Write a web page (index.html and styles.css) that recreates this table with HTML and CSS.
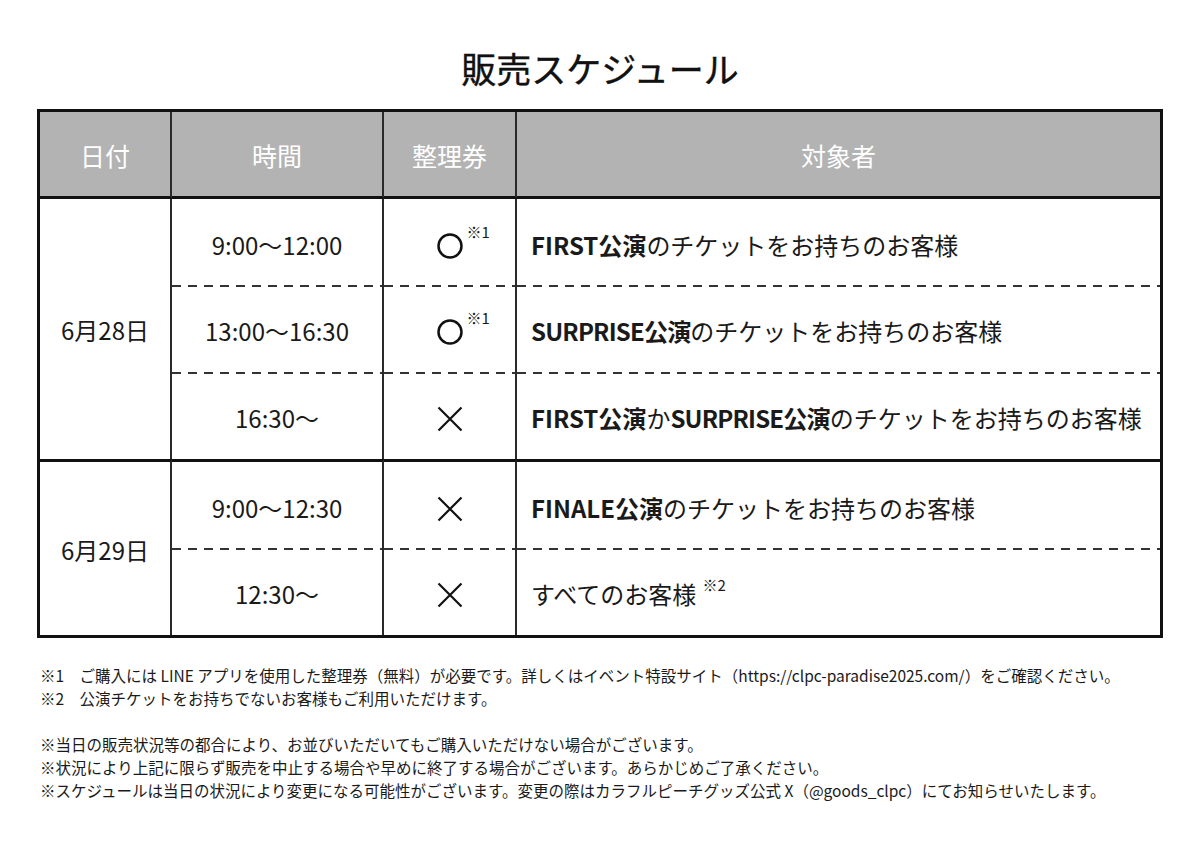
FILE: index.html
```html
<!DOCTYPE html>
<html lang="ja">
<head>
<meta charset="utf-8">
<title>販売スケジュール</title>
<link rel="stylesheet" href="styles.css">
</head>
<body>
<main class="page">
  <h1 class="title">販売スケジュール</h1>
  <table class="schedule">
    <thead>
      <tr class="head-row">
        <th class="c-date">日付</th>
        <th class="c-time">時間</th>
        <th class="c-ticket">整理券</th>
        <th class="c-target">対象者</th>
      </tr>
    </thead>
    <tbody>
      <tr class="r1">
        <td class="date" rowspan="3">6月28日</td>
        <td class="time">9:00〜12:00</td>
        <td class="mark"><span class="sym"><svg class="ic" viewBox="0 0 26 26" width="26" height="26"><circle cx="13" cy="13" r="11.5" fill="none" stroke="#111" stroke-width="2.5"/></svg><span class="note">※1</span></span></td>
        <td class="target"><b>FIRST公演</b>のチケットをお持ちのお客様</td>
      </tr>
      <tr class="r2 dashed">
        <td class="time">13:00〜16:30</td>
        <td class="mark"><span class="sym"><svg class="ic" viewBox="0 0 26 26" width="26" height="26"><circle cx="13" cy="13" r="11.5" fill="none" stroke="#111" stroke-width="2.5"/></svg><span class="note">※1</span></span></td>
        <td class="target"><b class="narrow">SURPRISE公演</b>のチケットをお持ちのお客様</td>
      </tr>
      <tr class="r3 dashed">
        <td class="time">16:30〜</td>
        <td class="mark"><span class="sym"><svg class="ic" viewBox="0 0 26 26" width="26" height="26"><path d="M1.5 1.5 L24.5 24.5 M24.5 1.5 L1.5 24.5" fill="none" stroke="#111" stroke-width="2.2"/></svg></span></td>
        <td class="target"><b>FIRST公演</b>か<b class="narrow">SURPRISE公演</b>のチケットをお持ちのお客様</td>
      </tr>
      <tr class="r4 group-start">
        <td class="date" rowspan="2">6月29日</td>
        <td class="time">9:00〜12:30</td>
        <td class="mark"><span class="sym"><svg class="ic" viewBox="0 0 26 26" width="26" height="26"><path d="M1.5 1.5 L24.5 24.5 M24.5 1.5 L1.5 24.5" fill="none" stroke="#111" stroke-width="2.2"/></svg></span></td>
        <td class="target"><b>FINALE公演</b>のチケットをお持ちのお客様</td>
      </tr>
      <tr class="r5 dashed">
        <td class="time">12:30〜</td>
        <td class="mark"><span class="sym"><svg class="ic" viewBox="0 0 26 26" width="26" height="26"><path d="M1.5 1.5 L24.5 24.5 M24.5 1.5 L1.5 24.5" fill="none" stroke="#111" stroke-width="2.2"/></svg></span></td>
        <td class="target">すべてのお客様<span class="note2">※2</span></td>
      </tr>
    </tbody>
  </table>
  <div class="notes">
    <p>※1　ご購入には LINE アプリを使用した整理券（無料）が必要です。詳しくはイベント特設サイト（https://clpc-paradise2025.com/）をご確認ください。<br>※2　公演チケットをお持ちでないお客様もご利用いただけます。</p>
    <p>※当日の販売状況等の都合により、お並びいただいてもご購入いただけない場合がございます。<br>※状況により上記に限らず販売を中止する場合や早めに終了する場合がございます。あらかじめご了承ください。<br>※スケジュールは当日の状況により変更になる可能性がございます。変更の際はカラフルピーチグッズ公式 X（@goods_clpc）にてお知らせいたします。</p>
  </div>
</main>
</body>
</html>
```

FILE: styles.css
```css
* { box-sizing: border-box; }
html, body { margin: 0; padding: 0; background: #fff; }
body {
  font-family: "Noto Sans CJK JP", "Noto Sans", sans-serif;
  color: #1a1a1a;
  width: 1200px;
  height: 849px;
  overflow: hidden;
}
.page { padding: 43px 0 0 37px; }
.title {
  margin: 0;
  width: 1126px;
  text-align: center;
  font-size: 35px;
  line-height: 50px;
  font-weight: 400;
  color: #111;
  -webkit-text-stroke: 0.4px #111;
}
.schedule {
  margin-top: 16px;
  width: 1126px;
  border: 3px solid #111;
  border-spacing: 0;
  table-layout: fixed;
}
.schedule th, .schedule td {
  padding: 0;
  border-right: 2px solid #2a2a2a;
  text-align: center;
  vertical-align: middle;
}
.schedule th:last-child, .schedule td.target { border-right: none; }
.c-date { width: 132px; }
.c-time { width: 212px; }
.c-ticket { width: 133px; }
.c-target { width: 643px; }
.head-row th {
  height: 87px;
  background: #b3b3b3;
  color: #fff;
  font-size: 25px;
  font-weight: 400;
  border-bottom: 3px solid #111;
  padding-top: 2px;
}
.schedule td {
  font-size: 24px;
  line-height: 30px;
  padding-top: 5px;
}
.r1 td.time, .r1 td.mark, .r1 td.target { height: 86px; }
.r2 td, .r3 td, .r5 td { height: 87px; }
.r4 td { height: 89px; border-top: 3px solid #111; }
.dashed td {
  background-image: linear-gradient(to right, #333 0 9px, transparent 9px 16px);
  background-size: 16px 1.5px;
  background-repeat: repeat-x;
  background-position: 0 0;
}
.schedule td.date { padding-top: 2px; }
.schedule td.target {
  text-align: left;
  padding-left: 14px;
  white-space: nowrap;
}
.target b { font-weight: 700; }
.target b.narrow { letter-spacing: -0.8px; }
.sym {
  position: relative;
  display: inline-block;
  width: 26px;
  height: 26px;
  vertical-align: middle;
  margin-top: -4px;
}
.ic { display: block; }
.note {
  position: absolute;
  left: 30px;
  top: -9px;
  font-size: 15px;
  line-height: 16px;
  white-space: nowrap;
}
.note2 {
  font-size: 15px;
  line-height: 16px;
  margin-left: 6px;
  position: relative;
  top: -13px;
}
.notes {
  margin-top: 26px;
  margin-left: 3px;
  font-size: 15.5px;
  line-height: 23px;
  color: #1a1a1a;
}
.notes p { margin: 0 0 23px 0; white-space: nowrap; }
```
